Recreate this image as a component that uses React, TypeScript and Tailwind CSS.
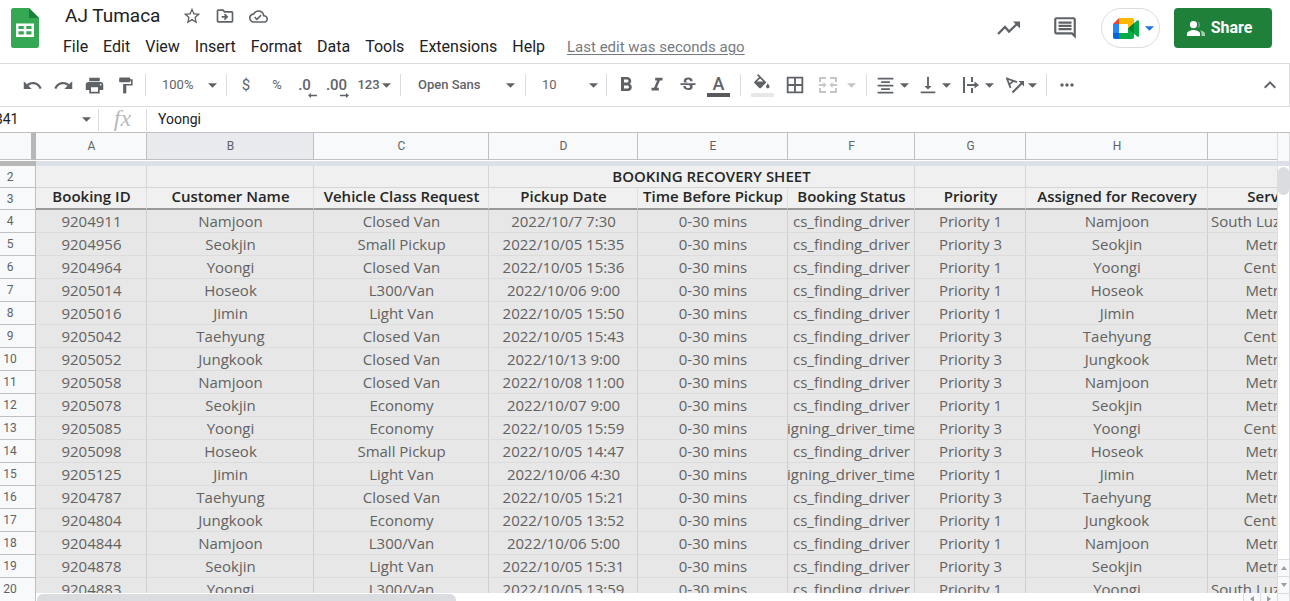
import React from "react";
import {
  MdUndo,
  MdRedo,
  MdPrint,
  MdFormatPaint,
  MdFormatBold,
  MdFormatItalic,
  MdStrikethroughS,
  MdBorderAll,
  MdFormatAlignCenter,
  MdVerticalAlignBottom,
  MdMoreHoriz,
  MdKeyboardArrowUp,
  MdStarBorder,
  MdOutlineDriveFileMove,
  MdOutlineCloudDone,
  MdOutlineInsertComment,
} from "react-icons/md";

const menus = ["File", "Edit", "View", "Insert", "Format", "Data", "Tools", "Extensions", "Help"];

const columns = [
  { letter: "A", title: "Booking ID", width: "w-[111px]" },
  { letter: "B", title: "Customer Name", width: "w-[167px]" },
  { letter: "C", title: "Vehicle Class Request", width: "w-[175px]" },
  { letter: "D", title: "Pickup Date", width: "w-[149px]" },
  { letter: "E", title: "Time Before Pickup", width: "w-[150px]" },
  { letter: "F", title: "Booking Status", width: "w-[127px]" },
  { letter: "G", title: "Priority", width: "w-[111px]" },
  { letter: "H", title: "Assigned for Recovery", width: "w-[182px]" },
  { letter: "", title: "Service Area", width: "w-[168px]" },
];

const finding = "cs_finding_driver";
const timeout = "assigning_driver_timeout";

type Booking = [string, string, string, string, string, string, string];

const bookings: Booking[] = [
  ["9204911", "Namjoon", "Closed Van", "2022/10/7 7:30", finding, "Priority 1", "South Luzon"],
  ["9204956", "Seokjin", "Small Pickup", "2022/10/05 15:35", finding, "Priority 3", "Metro Manila"],
  ["9204964", "Yoongi", "Closed Van", "2022/10/05 15:36", finding, "Priority 1", "Central Luzon"],
  ["9205014", "Hoseok", "L300/Van", "2022/10/06 9:00", finding, "Priority 1", "Metro Manila"],
  ["9205016", "Jimin", "Light Van", "2022/10/05 15:50", finding, "Priority 1", "Metro Manila"],
  ["9205042", "Taehyung", "Closed Van", "2022/10/05 15:43", finding, "Priority 3", "Central Luzon"],
  ["9205052", "Jungkook", "Closed Van", "2022/10/13 9:00", finding, "Priority 3", "Metro Manila"],
  ["9205058", "Namjoon", "Closed Van", "2022/10/08 11:00", finding, "Priority 3", "Metro Manila"],
  ["9205078", "Seokjin", "Economy", "2022/10/07 9:00", finding, "Priority 1", "Metro Manila"],
  ["9205085", "Yoongi", "Economy", "2022/10/05 15:59", timeout, "Priority 3", "Central Luzon"],
  ["9205098", "Hoseok", "Small Pickup", "2022/10/05 14:47", finding, "Priority 3", "Metro Manila"],
  ["9205125", "Jimin", "Light Van", "2022/10/06 4:30", timeout, "Priority 1", "Metro Manila"],
  ["9204787", "Taehyung", "Closed Van", "2022/10/05 15:21", finding, "Priority 3", "Metro Manila"],
  ["9204804", "Jungkook", "Economy", "2022/10/05 13:52", finding, "Priority 1", "Central Luzon"],
  ["9204844", "Namjoon", "L300/Van", "2022/10/06 5:00", finding, "Priority 1", "Metro Manila"],
  ["9204878", "Seokjin", "Light Van", "2022/10/05 15:31", finding, "Priority 3", "Metro Manila"],
  ["9204883", "Yoongi", "L300/Van", "2022/10/05 13:59", finding, "Priority 1", "South Luzon"],
];

function Caret({ className = "" }: { className?: string }) {
  return (
    <svg viewBox="0 0 10 5" className={`h-[5px] w-[9px] shrink-0 fill-current ${className}`} aria-hidden="true">
      <path d="M0 0h10L5 5z" />
    </svg>
  );
}

function Divider({ className = "" }: { className?: string }) {
  return <div className={`h-[22px] w-px shrink-0 bg-[#dadce0] ${className}`} />;
}

function Tool({ label, width = "w-[31px]", className = "", children }: { label: string; width?: string; className?: string; children: React.ReactNode }) {
  return (
    <button type="button" aria-label={label} className={`flex h-8 shrink-0 items-center justify-center ${width} ${className}`}>
      {children}
    </button>
  );
}

function SheetsLogo() {
  return (
    <svg viewBox="0 0 28 40" className="h-10 w-7 shrink-0" aria-label="Sheets home">
      <path d="M2.500 0H18l10 10v27.500a2.500 2.500 0 0 1-2.500 2.500h-23A2.500 2.500 0 0 1 0 37.500v-35A2.500 2.500 0 0 1 2.500 0z" fill="#34a853" />
      <path d="M18 0l10 10H18z" fill="#188038" />
      <path d="M5 15.500h18V29H5zM7.500 18v3h5.300v-3zm7.800 0v3h5.200v-3zm-7.800 5.200v3.300h5.300v-3.300zm7.800 0v3.300h5.200v-3.300z" fill="#fff" fillRule="evenodd" />
    </svg>
  );
}

function MeetLogo() {
  return (
    <svg viewBox="0 0 26 21" className="h-[21px] w-[26px]" aria-hidden="true">
      <path d="M6 0L0 6h6z" fill="#ea4335" />
      <path d="M0 6h6v9H0z" fill="#2684fc" />
      <path d="M0 15h6v6H2a2 2 0 0 1-2-2z" fill="#0066da" />
      <path d="M6 0h13a2 2 0 0 1 2 2v5l-6 4V6H6z" fill="#ffba00" />
      <path d="M6 15h9v-5l6 4v5a2 2 0 0 1-2 2H6z" fill="#00ac47" />
      <path d="M15 10.500L24 2.500c.8-.6 2-.2 2 .8v14.400c0 1-1.200 1.400-2 .8z" fill="#00ac47" />
      <path d="M15 10.500l6-5.300v10.600z" fill="#00832d" />
    </svg>
  );
}

function Header() {
  return (
    <header className="flex h-16 shrink-0 items-start border-b border-[#dadce0] pl-[11px] pr-[18px] pt-2">
      <SheetsLogo />
      <div className="ml-[17px] flex flex-col">
        <div className="-mt-1 flex h-6 items-center pl-[9px] text-[#5f6368]">
          <h1 className="w-[115px] text-[19px] leading-6 text-[#202124]">AJ Tumaca</h1>
          <Tool label="Star" width="w-6"><MdStarBorder size={20} /></Tool>
          <Tool label="Move" width="w-6" className="ml-[9px]"><MdOutlineDriveFileMove size={20} /></Tool>
          <Tool label="See document status" width="w-6" className="ml-[9px]"><MdOutlineCloudDone size={19} /></Tool>
        </div>
        <nav className="mt-[9px] flex h-5 items-center text-[16px] leading-5 text-[#202124]">
          {menus.map((menu) => (
            <button key={menu} type="button" className="pr-2 pl-[7px] whitespace-nowrap">{menu}</button>
          ))}
          <a href="#history" className="ml-[14px] text-[15px] whitespace-nowrap text-[#777b80] underline underline-offset-2">Last edit was seconds ago</a>
        </nav>
      </div>
      <div className="ml-auto flex h-10 items-center text-[#5f6368]">
        <Tool label="Activity" width="w-8">
          <svg viewBox="0 0 24 14" className="h-[14px] w-6" aria-hidden="true">
            <path d="M1 13l7-7 4 4.500L20 3" fill="none" stroke="currentColor" strokeWidth="2.300" />
            <path d="M16 .5h7v7z" fill="currentColor" />
          </svg>
        </Tool>
        <Tool label="Comments" width="w-8" className="ml-6"><MdOutlineInsertComment size={26} /></Tool>
        <button type="button" aria-label="Join a call" className="ml-5 flex h-10 w-[59px] items-center justify-center gap-1.5 rounded-full border border-[#dadce0] pl-1.5 text-[#1a73e8]">
          <MeetLogo />
          <Caret />
        </button>
        <button type="button" className="ml-[14px] flex h-10 w-[98px] items-center justify-center gap-1.5 rounded bg-[#1e8039] pr-[7px] text-[16px] font-bold text-white">
          <svg viewBox="0 0 18 15" className="h-[15px] w-[18px] fill-white" aria-hidden="true">
            <circle cx="6.500" cy="3.600" r="3.600" />
            <path d="M0 15v-2.300C0 10.300 4.300 9 6.500 9s6.500 1.300 6.500 3.700V15z" />
            <path d="M10.500.3a3.600 3.600 0 0 1 0 6.700 5 5 0 0 0 0-6.700zM13 9.300c2.200.5 5 1.600 5 3.400V15h-3.500v-2.300c0-1.400-.7-2.500-1.500-3.400z" opacity=".6" />
          </svg>
          Share
        </button>
      </div>
    </header>
  );
}

function ToolSelect({ label, value, width, pad, caret }: { label: string; value: string; width: string; pad: string; caret: string }) {
  return (
    <div className={`relative flex h-8 shrink-0 items-center ${width}`}>
      <select aria-label={label} defaultValue={value} className={`h-8 w-full appearance-none bg-transparent ${pad}`}>
        <option>{value}</option>
      </select>
      <Caret className={`pointer-events-none absolute ${caret}`} />
    </div>
  );
}

function Toolbar() {
  return (
    <div className="flex h-[43px] shrink-0 items-center overflow-hidden border-b border-r border-[#dadce0] pl-[17px] pr-[7px] text-[13px] text-[#5f6368]">
      <Tool label="Undo"><MdUndo size={21} /></Tool>
      <Tool label="Redo"><MdRedo size={21} /></Tool>
      <Tool label="Print"><MdPrint size={21} /></Tool>
      <Tool label="Paint format"><MdFormatPaint size={19} /></Tool>
      <Divider className="ml-1" />
      <ToolSelect label="Zoom" value="100%" width="w-[80px]" pad="pl-4" caret="right-[9px]" />
      <Divider />
      <Tool label="Format as currency" width="w-[38px]"><span className="text-[15px]">$</span></Tool>
      <Tool label="Format as percent" width="w-6"><span className="text-[13px]">%</span></Tool>
      <Tool label="Decrease decimal places">
        <span className="relative text-[15px] font-medium">
          .0
          <svg viewBox="0 0 9 5" className="absolute -right-1.5 -bottom-0.5 h-[5px] w-[9px] fill-current" aria-hidden="true">
            <path d="M0 2.500L3 0v1.700h6v1.600H3V5z" />
          </svg>
        </span>
      </Tool>
      <Tool label="Increase decimal places" width="w-[33px]">
        <span className="relative text-[15px] font-medium">
          .00
          <svg viewBox="0 0 9 5" className="absolute -right-0.5 -bottom-0.5 h-[5px] w-[9px] fill-current" aria-hidden="true">
            <path d="M9 2.500L6 0v1.700H0v1.600h6V5z" />
          </svg>
        </span>
      </Tool>
      <Tool label="More formats" width="w-9" className="ml-[3px] gap-0.5"><span className="text-[13px] font-medium">123</span><Caret /></Tool>
      <Divider className="ml-2" />
      <ToolSelect label="Font" value="Open Sans" width="w-[124px]" pad="pl-[17px] font-medium" caret="right-[10px]" />
      <Divider />
      <ToolSelect label="Font size" value="10" width="w-[80px]" pad="pl-4" caret="right-[8px]" />
      <Divider />
      <Tool label="Bold" className="ml-[3px]"><MdFormatBold size={24} /></Tool>
      <Tool label="Italic"><MdFormatItalic size={22} /></Tool>
      <Tool label="Strikethrough"><MdStrikethroughS size={20} /></Tool>
      <Tool label="Text color" className="flex-col">
        <span className="text-[18px] leading-[19px] font-medium">A</span>
        <span className="h-1 w-[23px] bg-[#595959]" />
      </Tool>
      <Divider className="ml-1.5" />
      <Tool label="Fill color" width="w-[42px]" className="flex-col">
        <svg viewBox="0 0 20 17" className="h-[17px] w-5 fill-current" aria-hidden="true">
          <path d="M6.200 0L5 1.200l2 2L2.600 7.600a1.200 1.200 0 0 0 0 1.700l4.600 4.600c.5.5 1.300.5 1.700 0l4.700-4.600c.5-.5.5-1.200 0-1.700zM15.800 9.500s-1.800 2-1.800 3.100a1.800 1.800 0 0 0 3.600 0c0-1.100-1.800-3.100-1.800-3.100z" />
          <path d="M4.900 7.500L8.100 4.600l3.200 2.900z" fill="#fff" />
        </svg>
        <span className="mt-0.5 h-1 w-[23px] bg-[#e7e7e7]" />
      </Tool>
      <Tool label="Borders" width="w-6"><MdBorderAll size={22} /></Tool>
      <Tool label="Merge cells" width="w-[47px]" className="ml-3 justify-start gap-[10px] text-[#c4c6c8]">
        <svg viewBox="0 0 18 16" className="h-4 w-[18px] shrink-0" fill="none" stroke="currentColor" strokeWidth="2" aria-hidden="true">
          <path d="M1 5V1h6M11 1h6v4M1 11v4h6M11 15h6v-4M0 8h6M18 8h-6" />
          <path d="M4.500 5l3 3-3 3zM13.500 5l-3 3 3 3z" fill="currentColor" stroke="none" />
        </svg>
        <Caret />
      </Tool>
      <Divider />
      <Tool label="Horizontal align" width="w-[42px]" className="ml-2 justify-start gap-1"><MdFormatAlignCenter size={21} /><Caret /></Tool>
      <Tool label="Vertical align" width="w-[43px]" className="justify-start gap-[3px]"><MdVerticalAlignBottom size={22} /><Caret /></Tool>
      <Tool label="Text wrapping" width="w-[43px]" className="ml-[3px] justify-start gap-1.5">
        <svg viewBox="0 0 16 16" className="h-4 w-4 shrink-0" fill="none" stroke="currentColor" strokeWidth="2" aria-hidden="true">
          <path d="M1 0v16M9 0v5M9 11v5M4 8h9" />
          <path d="M11.500 4.500L16 8l-4.500 3.500z" fill="currentColor" stroke="none" />
        </svg>
        <Caret />
      </Tool>
      <Tool label="Text rotation" width="w-10" className="justify-start gap-1">
        <svg viewBox="0 0 18 17" className="h-[17px] w-[18px] shrink-0" fill="none" stroke="currentColor" strokeWidth="1.800" aria-hidden="true">
          <path d="M4.500 11L1 1.500l10 3.700M3.300 7.700l4.300-4" />
          <path d="M6.500 15.500L16 6" strokeWidth="2" />
          <path d="M12.500 4H18v5.500z" fill="currentColor" stroke="none" />
        </svg>
        <Caret />
      </Tool>
      <Divider />
      <Tool label="More" width="w-10"><MdMoreHoriz size={20} /></Tool>
      <Tool label="Hide the menus" width="w-6" className="ml-auto"><MdKeyboardArrowUp size={24} /></Tool>
    </div>
  );
}

function FormulaBar() {
  return (
    <div className="flex h-[26px] shrink-0 items-center overflow-hidden border-b border-[#c0c0c0] text-[14px] text-[#202124]">
      <div className="flex h-full w-[98px] shrink-0 items-center text-[#5f6368]">
        <input aria-label="Name box" defaultValue="B41" className="-ml-1.5 w-[88px] shrink-0 bg-transparent text-[14px] text-[#202124] outline-none" />
        <Caret />
      </div>
      <Divider />
      <span className="w-[47px] shrink-0 pb-1 text-center font-['Liberation_Serif',serif] text-[24px] leading-5 text-[#b8babd] italic">fx</span>
      <Divider />
      <input aria-label="Formula" defaultValue="Yoongi" className="ml-[11px] min-w-0 flex-1 bg-transparent outline-none" />
    </div>
  );
}

const rowHead = "border-r border-b border-[#c0c0c0] bg-[#f8f9fa] p-0 pr-[15px] text-center font-['Roboto',sans-serif] text-[12px] font-normal text-[#5f6368]";

function Sheet() {
  return (
    <table className="w-[1376px] table-fixed border-separate border-spacing-0 font-['Open_Sans',sans-serif] text-[15px] leading-[22px] text-[#626262]">
      <colgroup>
        <col className="w-[36px]" />
        {columns.map((c) => <col key={c.title} className={c.width} />)}
      </colgroup>
      <thead>
        <tr className="h-[27px] font-['Roboto',sans-serif] text-[12px] text-[#5f6368]">
          <td className="border-r-[5px] border-b border-r-[#b7b7b7] border-b-[#c0c0c0] bg-[#f8f9fa] p-0" />
          {columns.map((c) => (
            <th key={c.title} scope="col" className={`border-r border-b border-[#c0c0c0] p-0 pl-px font-normal ${c.letter === "B" ? "bg-[#e8eaed]" : "bg-[#f8f9fa]"}`}>{c.letter}</th>
          ))}
        </tr>
        <tr className="h-[6px]">
          <td className="border-t border-white bg-[#b7b7b7] p-0" />
          <td colSpan={9} className="border-t border-white bg-[#dce0e8] p-0" />
        </tr>
      </thead>
      <tbody>
        <tr className="h-[22px] leading-[18px]">
          <th scope="row" className={rowHead}>2</th>
          {[0, 1, 2].map((i) => <td key={i} className="border-r border-b border-[#d5d5d5] bg-[#f0f0f0] p-0" />)}
          <th colSpan={3} className="border-r border-b border-[#d5d5d5] bg-[#f0f0f0] p-0 pb-0.5 pl-5 font-semibold text-[#262626]">BOOKING RECOVERY SHEET</th>
          {[6, 7, 8].map((i) => <td key={i} className="border-r border-b border-[#d5d5d5] bg-[#f0f0f0] p-0" />)}
        </tr>
        <tr className="h-[22px] leading-4">
          <th scope="row" className={rowHead}>3</th>
          {columns.map((c) => (
            <th key={c.title} scope="col" className="border-r border-b-2 border-r-[#dedede] border-b-[#999] bg-[#f0f0f0] p-0 pb-1 pl-px font-semibold whitespace-nowrap text-[#262626]">{c.title}</th>
          ))}
        </tr>
        {bookings.map((b, i) => {
          const [id, name, vehicle, date, status, priority, area] = b;
          const cells = [id, name, vehicle, date, "0-30 mins", status, priority, name, area];
          return (
            <tr key={id} className="h-[23px]">
              <th scope="row" className={rowHead}>{i + 4}</th>
              {cells.map((text, j) => (
                <td key={j} className="overflow-hidden border-r border-b border-r-[#cfcfcf] border-b-[#dcdcdc] bg-[#e7e7e7] p-0">
                  <div className={`flex whitespace-nowrap ${text === "South Luzon" ? "justify-start pl-[3px]" : "justify-center pl-px"}`}>{text}</div>
                </td>
              ))}
            </tr>
          );
        })}
      </tbody>
    </table>
  );
}

function ScrollArrow({ label, turn, className }: { label: string; turn: string; className: string }) {
  return (
    <button type="button" aria-label={label} className={`flex shrink-0 items-center justify-center border-[#dadce0] bg-[#f8f9fa] text-[#9a9c9f] ${className}`}>
      <svg viewBox="0 0 6 4" className={`h-1 w-1.5 fill-current ${turn}`} aria-hidden="true"><path d="M0 4h6L3 0z" /></svg>
    </button>
  );
}

export default function App() {
  return (
    <div className="flex h-screen flex-col overflow-hidden bg-white font-['Roboto',sans-serif]">
      <Header />
      <Toolbar />
      <FormulaBar />
      <main className="flex min-h-0 flex-1">
        <div className="flex min-w-0 flex-1 flex-col">
          <div className="min-h-0 flex-1 overflow-hidden"><Sheet /></div>
          <div className="flex h-2 shrink-0 overflow-hidden">
            <div className="w-9 shrink-0 border-r border-[#c0c0c0] bg-[#f8f9fa]" />
            <div className="mt-px ml-px h-3 w-[419px] shrink-0 rounded-full bg-[#dadce0]" />
            <ScrollArrow label="Scroll left" turn="-rotate-90" className="ml-auto h-3 w-[17px] border-l" />
            <ScrollArrow label="Scroll right" turn="rotate-90" className="h-3 w-[17px] border-l" />
          </div>
        </div>
        <div className="flex w-[13px] shrink-0 flex-col border-x border-[#dadce0]">
          <div className="h-7 shrink-0 bg-[#f8f9fa]" />
          <div className="h-[5px] shrink-0 bg-[#dce0e8]" />
          <div className="mt-px h-7 shrink-0 rounded-full bg-[#dadce0]" />
          <div className="flex-1" />
          <ScrollArrow label="Scroll up" turn="rotate-0" className="h-[17px] border-t" />
          <ScrollArrow label="Scroll down" turn="rotate-180" className="h-[17px] border-t" />
          <div className="h-2 shrink-0 border-t border-[#dadce0] bg-[#f8f9fa]" />
        </div>
      </main>
    </div>
  );
}
